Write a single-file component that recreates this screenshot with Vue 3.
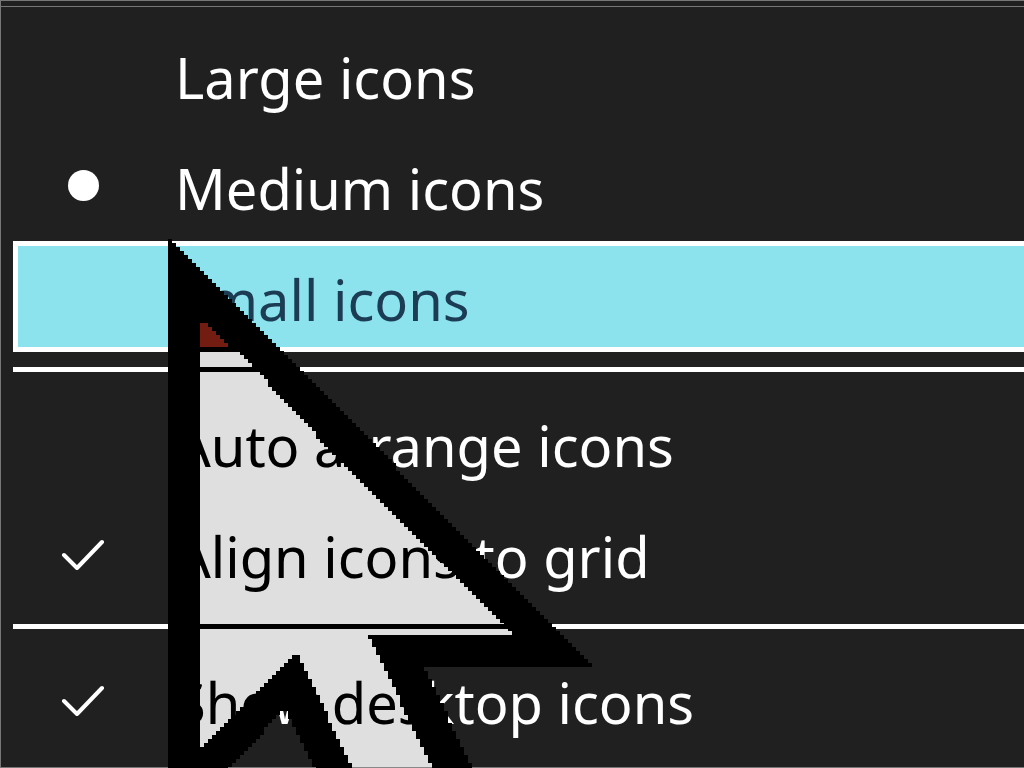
<script setup>
import { ref } from 'vue'

const size = ref('medium')
const sizes = [
  { id: 'large', label: 'Large icons' },
  { id: 'medium', label: 'Medium icons' },
  { id: 'small', label: 'Small icons', hot: true },
]
const arrange = ref([
  { id: 'auto', label: 'Auto arrange icons', on: false },
  { id: 'align', label: 'Align icons to grid', on: true },
])
const show = ref([{ id: 'show', label: 'Show desktop icons', on: true }])

// The pointer is drawn in blocks of 4px, row by row.
const CELL = 4
const outline = [
  [0, 0], [4, 0], [132, 129], [260, 261], [425, 428], [256, 428], [306, 532],
  [148, 532], [118, 472], [114, 472], [60, 532], [0, 532],
]
const body = [
  [32, 84], [39, 84], [90, 133], [160, 209], [256, 305], [346, 396], [200, 396],
  [266, 532], [186, 532], [130, 416], [124, 416], [32, 508],
]
function blocks(points) {
  let d = ''
  for (let row = 0; row < 133; row++) {
    const y = row * CELL + CELL / 2
    const xs = []
    points.forEach(([x1, y1], i) => {
      const [x2, y2] = points[(i + 1) % points.length]
      if ((y1 <= y) !== (y2 <= y)) {
        xs.push(Math.round((x1 + ((y - y1) * (x2 - x1)) / (y2 - y1)) / CELL) * CELL)
      }
    })
    xs.sort((a, b) => a - b)
    for (let i = 0; i + 1 < xs.length; i += 2) {
      if (xs[i + 1] > xs[i]) d += `M${xs[i]} ${row * CELL}H${xs[i + 1]}v${CELL}H${xs[i]}z`
    }
  }
  return d
}
const bodyPath = blocks(body)
const edgePath = blocks(outline) + bodyPath
</script>

<template>
  <main class="desktop">
    <form class="menu">
      <div class="inner">
        <label v-for="s in sizes" :key="s.id" class="item" :class="{ hot: s.hot }">
          <span class="mark">
            <input v-model="size" class="radio" type="radio" name="size" :value="s.id" />
          </span>
          <span class="text">{{ s.label }}</span>
        </label>
        <hr class="rule" />
        <label v-for="a in arrange" :key="a.id" class="item">
          <span class="mark">
            <input v-model="a.on" class="tick" type="checkbox" />
            <svg v-if="a.on" class="check" viewBox="0 0 44 32" aria-hidden="true">
              <path d="M3 17 16 30 41 4" />
            </svg>
          </span>
          <span class="text">{{ a.label }}</span>
        </label>
        <hr class="rule" />
        <label v-for="a in show" :key="a.id" class="item">
          <span class="mark">
            <input v-model="a.on" class="tick" type="checkbox" />
            <svg v-if="a.on" class="check" viewBox="0 0 44 32" aria-hidden="true">
              <path d="M3 17 16 30 41 4" />
            </svg>
          </span>
          <span class="text">{{ a.label }}</span>
        </label>
      </div>
    </form>
    <svg class="pointer invert" viewBox="0 0 428 532" aria-hidden="true">
      <path :d="bodyPath" fill="#fff" />
    </svg>
    <svg class="pointer" viewBox="0 0 428 532" aria-hidden="true">
      <path :d="edgePath" fill="#000" fill-rule="evenodd" />
    </svg>
  </main>
</template>

<style>
body {
  margin: 0;
  background: #202020;
}
</style>

<style scoped>
.desktop {
  position: relative;
  isolation: isolate;
  overflow: hidden;
  min-height: 100vh;
  background: #202020;
}
.menu {
  box-sizing: border-box;
  min-height: 100vh;
  padding-top: 5px;
  border: 1px solid #777;
  border-right: 0;
  color: #fff;
  font-family: "Noto Sans", "Open Sans", sans-serif;
  font-size: 56px;
}
.inner {
  padding: 12px 0 12px 12px;
  border-top: 1px solid #777;
}
.item {
  display: grid;
  grid-template-columns: 130px 1fr;
  column-gap: 27px;
  border: 5px solid transparent;
  border-right: 0;
}
.hot {
  border-color: #fff;
  background: #8ce3ee;
  color: #1c3c54;
}
.text {
  padding-top: 6px;
  line-height: 95px;
  white-space: nowrap;
}
.mark {
  position: relative;
  display: flex;
  align-items: center;
  justify-content: center;
}
.radio,
.tick {
  appearance: none;
  width: 31px;
  height: 31px;
  margin: 0;
  border-radius: 50%;
}
.radio:checked {
  background: #fff;
}
.check {
  position: absolute;
  width: 44px;
  height: 32px;
  fill: none;
  stroke: #fff;
  stroke-width: 4;
  stroke-linecap: round;
  stroke-linejoin: round;
}
.rule {
  height: 5px;
  margin: 15px 0;
  border: 0;
  background: #fff;
}
.pointer {
  position: absolute;
  top: 239px;
  left: 168px;
  width: 428px;
  height: 532px;
  pointer-events: none;
  shape-rendering: crispEdges;
}
.invert {
  mix-blend-mode: difference;
}
</style>
